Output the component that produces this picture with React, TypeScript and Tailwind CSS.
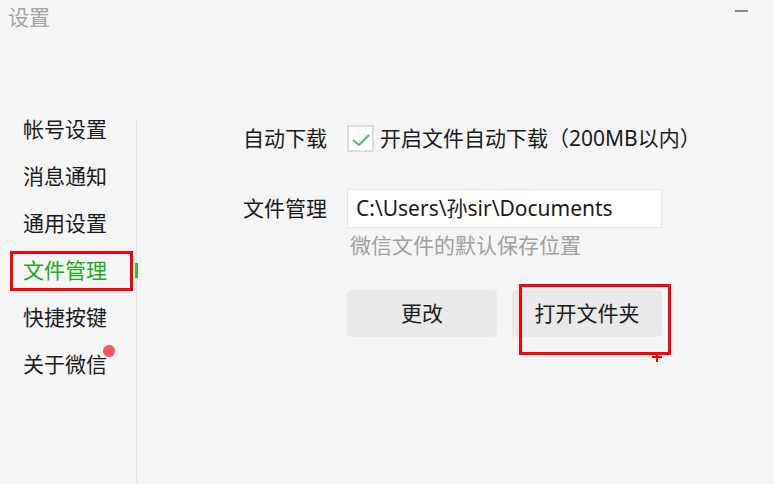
import React from "react";

const items = ["帐号设置", "消息通知", "通用设置", "文件管理", "快捷按键", "关于微信"];

export default function App() {
  return (
    <div
      className="w-[774px] h-[484px] bg-[#f5f5f5] flex flex-col overflow-hidden text-[#1a1a1a]"
      style={{ fontFamily: '"Noto Sans", "Noto Sans CJK SC", sans-serif' }}
    >
      <div className="h-[106px] flex justify-between items-start shrink-0">
        <div className="pl-[8px] pt-[2px] h-[30px] leading-[30px] text-[21px] text-[#a3a3a3]">设置</div>
        <div className="w-[13px] h-[2px] bg-[#8a8a8a] mt-[10px] mr-[26px]" />
      </div>
      <div className="flex flex-1">
        <div className="w-[136px] flex flex-col shrink-0">
          {items.map((t, i) => (
            <div
              key={t}
              className={
                "relative h-[47px] pl-[23px] flex items-center text-[21px] " +
                (i === 3 ? "text-[#1aad19]" : "text-[#1a1a1a]")
              }
            >
              {t}
              {i === 3 && (
                <>
                  <div className="absolute left-[10px] top-[4px] w-[123px] h-[40px] border-[3px] border-[#ff0000]" />
                  <div className="absolute left-[135px] top-[16px] w-[3px] h-[15px] bg-[#2fc02f] z-10" />
                </>
              )}
              {i === 5 && (
                <div className="absolute left-[103px] top-[4px] w-[12px] h-[12px] rounded-full bg-[#f45656]" />
              )}
            </div>
          ))}
        </div>
        <div className="w-px mt-[15px] bg-[#e2e2e2] shrink-0" />
        <div className="flex flex-col pl-[106px] pt-[19px]">
          <div className="flex items-center h-[27px]">
            <div className="w-[104px] text-[21px]">自动下载</div>
            <div className="w-[27px] h-[27px] border-2 border-[#dcdcdc] bg-white flex items-center justify-center">
              <svg width="23" height="23" viewBox="0 0 23 23">
                <polyline points="4,13 10,18 20,8" fill="none" stroke="#4dbd5a" strokeWidth="2" />
              </svg>
            </div>
            <div className="ml-[6px] text-[21px]">开启文件自动下载（200MB以内）</div>
          </div>
          <div className="flex items-center mt-[37px] h-[39px]">
            <div className="w-[104px] text-[21px]">文件管理</div>
            <div className="w-[315px] h-[39px] bg-white border border-[#e6e6e6] pl-[8px] flex items-center text-[21px]">
              C:\Users\孙sir\Documents
            </div>
          </div>
          <div className="ml-[104px] pl-[3px] mt-[5px] h-[24px] leading-[24px] text-[21px] text-[#a0a0a0]">
            微信文件的默认保存位置
          </div>
          <div className="flex ml-[104px] mt-[33px] gap-[15px]">
            <div className="w-[150px] h-[47px] rounded-[5px] bg-[#e9e9e9] flex items-center justify-center text-[21px]">
              更改
            </div>
            <div className="relative w-[150px] h-[47px] rounded-[5px] bg-[#e9e9e9] flex items-center justify-center text-[21px]">
              打开文件夹
              <div className="absolute left-[7px] top-[-6px] w-[152px] h-[71px] border-[3px] border-[#ff0000]" />
              <div className="absolute left-[140px] top-[66px] w-[10px] h-[2px] bg-[#ff0000]" />
              <div className="absolute left-[144px] top-[63px] w-[2px] h-[9px] bg-[#ff0000]" />
            </div>
          </div>
        </div>
      </div>
    </div>
  );
}
